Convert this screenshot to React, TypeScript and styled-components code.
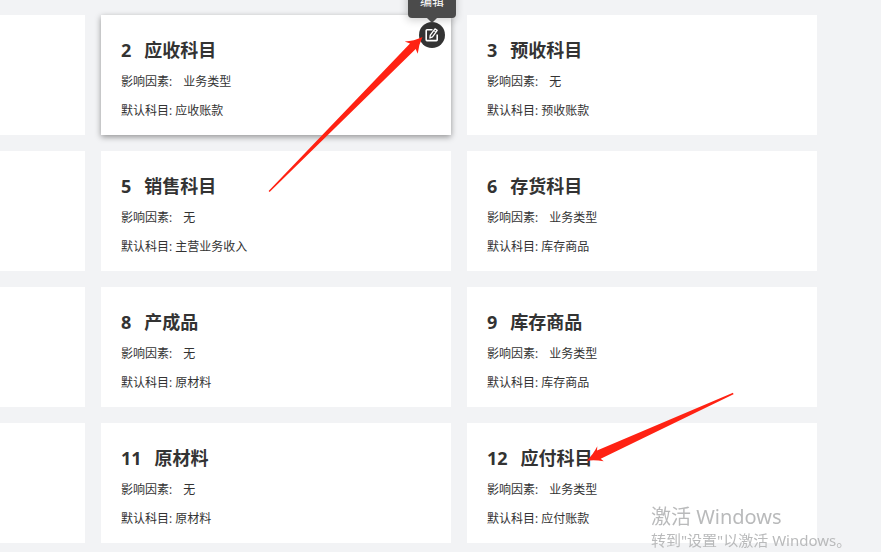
import React from "react";
import styled, { createGlobalStyle, css } from "styled-components";

const GlobalStyle = createGlobalStyle`
  * { box-sizing: border-box; }
  body {
    margin: 0;
    min-height: 100vh;
    background: #f2f3f5;
    color: #333;
    font-family: "Open Sans", "Noto Sans CJK SC", sans-serif;
    overflow: hidden;
  }
`;

const Page = styled.main`
  position: relative;
  min-height: 100vh;
  padding: 15px 64px 0 0;
`;

const Grid = styled.div`
  display: grid;
  grid-template-columns: 85px 1fr 1fr;
  gap: 16px;
`;

const Card = styled.article<{ $active?: boolean }>`
  position: relative;
  min-height: 120px;
  padding: 19px 20px 10px;
  background: #fff;
  ${(p) => p.$active && css`box-shadow: 0 2px 6px rgba(0, 0, 0, 0.4);`}
`;

const Title = styled.h2`
  display: flex;
  gap: 13px;
  margin: 0 0 1px;
  font-size: 18px;
  line-height: 32px;
  font-weight: 700;
`;

const Field = styled.p<{ $gap: number }>`
  display: flex;
  gap: ${(p) => p.$gap}px;
  margin: 0;
  font-size: 12px;
  line-height: 29px;
`;

const Action = styled.div`
  position: absolute;
  top: 7px;
  right: 6px;
`;

const EditButton = styled.button`
  display: flex;
  align-items: center;
  justify-content: center;
  width: 26px;
  height: 26px;
  padding: 0;
  border: 0;
  border-radius: 50%;
  background: #333;
  color: #fff;
  cursor: pointer;
`;

const Tooltip = styled.div`
  position: absolute;
  bottom: 30px;
  left: 50%;
  transform: translateX(-50%);
  padding: 8px 12px;
  border-radius: 4px;
  background: #4b4b4b;
  box-shadow: 0 2px 8px rgba(0, 0, 0, 0.2);
  color: #fff;
  font-size: 12px;
  line-height: 16px;
  white-space: nowrap;

  &::after {
    content: "";
    position: absolute;
    top: 100%;
    left: 50%;
    margin-left: -5px;
    border: 5px solid transparent;
    border-top-color: #4b4b4b;
    border-bottom: 0;
  }
`;

const Annotation = styled.svg`
  position: absolute;
  top: 0;
  left: 0;
  overflow: visible;
  pointer-events: none;
`;

const Watermark = styled.aside`
  position: fixed;
  right: 30px;
  bottom: 1px;
  width: 200px;
  color: #b9babb;
  font-family: "Noto Sans", "Noto Sans CJK SC", sans-serif;
  font-size: 15px;
  line-height: 22px;
  white-space: nowrap;
  pointer-events: none;
`;

const WatermarkTitle = styled.div`
  font-size: 20px;
  line-height: 25px;
`;

type Subject = { no: number; name?: string; factor?: string; account?: string };

const subjects: Subject[] = [
  { no: 1 },
  { no: 2, name: "应收科目", factor: "业务类型", account: "应收账款" },
  { no: 3, name: "预收科目", factor: "无", account: "预收账款" },
  { no: 4 },
  { no: 5, name: "销售科目", factor: "无", account: "主营业务收入" },
  { no: 6, name: "存货科目", factor: "业务类型", account: "库存商品" },
  { no: 7 },
  { no: 8, name: "产成品", factor: "无", account: "原材料" },
  { no: 9, name: "库存商品", factor: "业务类型", account: "库存商品" },
  { no: 10 },
  { no: 11, name: "原材料", factor: "无", account: "原材料" },
  { no: 12, name: "应付科目", factor: "业务类型", account: "应付账款" },
];

const EditIcon = () => (
  <svg width="14" height="14" viewBox="0 0 14 14" fill="none" stroke="currentColor" aria-hidden="true">
    <path d="M7.5 1.8H2a.8.8 0 0 0-.8.8v9.2a.8.8 0 0 0 .8.8h9.4a.8.8 0 0 0 .8-.8V6.5" strokeWidth="1.6" />
    <path d="M4.9 10l.4-2.8L10 .9l2.2 1.5-4.7 6.4z" strokeWidth="1.3" strokeLinejoin="round" />
    <path d="M8.8 2.6L11 4.2" strokeWidth="1" />
  </svg>
);

function SubjectCard({ subject, active }: { subject: Subject; active?: boolean }) {
  if (!subject.name) return <Card />;
  return (
    <Card $active={active}>
      <Title>
        <span>{subject.no}</span>
        <span>{subject.name}</span>
      </Title>
      <Field $gap={11}>
        <span>影响因素:</span>
        <span>{subject.factor}</span>
      </Field>
      <Field $gap={3}>
        <span>默认科目:</span>
        <span>{subject.account}</span>
      </Field>
      {active && (
        <Action>
          <EditButton type="button" aria-labelledby="edit-tip">
            <EditIcon />
          </EditButton>
          <Tooltip role="tooltip" id="edit-tip">编辑</Tooltip>
        </Action>
      )}
    </Card>
  );
}

export default function App() {
  return (
    <>
      <GlobalStyle />
      <Page>
        <Grid>
          {subjects.map((s) => (
            <SubjectCard key={s.no} subject={s} active={s.no === 2} />
          ))}
        </Grid>
        <Annotation width="881" height="552" viewBox="0 0 881 552" fill="#ff2213" aria-hidden="true">
          <path d="M268.6 191L410 43.5L404.7 41.5Q414 41 422.5 37Q418.5 45 417.7 53.7L415.7 49L269.6 192Z" />
          <path d="M733 392.8L597 450.5L597.3 446.3Q593 455 586.5 460.7Q595 459.5 603.7 461.3L600.7 458.7L733.5 394.3Z" />
        </Annotation>
      </Page>
      <Watermark>
        <WatermarkTitle>激活 Windows</WatermarkTitle>
        <div>转到"设置"以激活 Windows。</div>
      </Watermark>
    </>
  );
}
